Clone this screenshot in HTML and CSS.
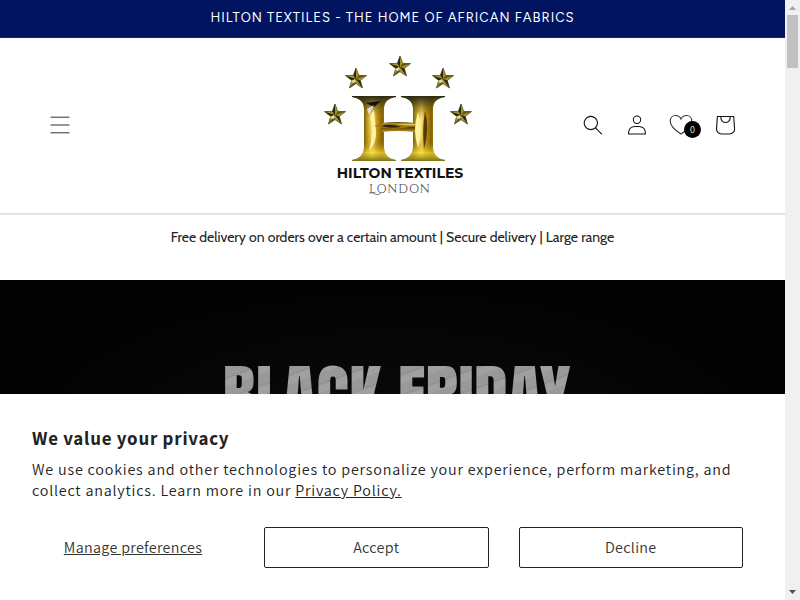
FILE: index.html
```html
<!DOCTYPE html>
<html lang="en">
<head>
<meta charset="utf-8">
<meta name="viewport" content="width=device-width, initial-scale=1">
<title>Hilton Textiles</title>
<link rel="stylesheet" href="styles.css">
</head>
<body>
<div class="page">
  <div class="announcement">HILTON TEXTILES - THE HOME OF AFRICAN FABRICS</div>
  <header class="header">
    <button class="icon-button menu" aria-label="Menu">
      <svg width="20" height="20" viewBox="0 0 20 20" stroke="#333" stroke-width="1"><path d="M.5 2.200h19M.5 10h19M.5 17.800h19"/></svg>
    </button>
    <a class="logo" href="#" aria-label="Hilton Textiles London">
      <svg width="150" height="144" viewBox="0 0 150 144">
        <defs>
          <linearGradient id="stem" x1="0" x2="1" y1="0" y2="0">
            <stop offset="0" stop-color="#3d3508"/><stop offset=".24" stop-color="#53440a"/><stop offset=".36" stop-color="#c9a820"/><stop offset=".46" stop-color="#ffe985"/><stop offset=".56" stop-color="#c59b17"/><stop offset=".68" stop-color="#866005"/><stop offset=".88" stop-color="#c99f20"/><stop offset="1" stop-color="#463706"/>
          </linearGradient>
          <linearGradient id="shade" x1="0" x2="0" y1="0" y2="1">
            <stop offset="0" stop-color="#2b2915"/><stop offset=".12" stop-color="#4d4410" stop-opacity=".7"/><stop offset=".35" stop-color="#ad8c13" stop-opacity="0"/><stop offset=".7" stop-color="#966b00" stop-opacity=".2"/><stop offset=".87" stop-color="#f2dc31" stop-opacity=".7"/><stop offset="1" stop-color="#7b7119"/>
          </linearGradient>
          <linearGradient id="bar" x1="0" x2="0" y1="0" y2="1"><stop offset="0" stop-color="#473808"/><stop offset=".25" stop-color="#e2c447"/><stop offset=".55" stop-color="#594008"/><stop offset="1" stop-color="#c69c20"/></linearGradient>
          <path id="post" d="M0 0H44V1C37 2 32 5 32 13V51C32 59 37 63 44 64V65H0V64C7 63 12 59 12 51V13C12 5 7 2 0 1Z"/>
          <g id="star">
            <path fill="#625618" stroke="#39340f" stroke-width=".7" d="M0-11 2.700-3.600 10.500-3.400 4.300 1.400 6.500 9 0 4.600-6.500 9-4.300 1.400-10.500-3.400-2.700-3.600Z"/>
            <path fill="#a4922b" d="M0-10V0L2.600-3.500ZM10-3 0 0 4.200 1.400ZM6 8 0 0V4.400ZM-6 8 0 0-4.200 1.400ZM-10-3 0 0-2.600-3.500Z"/>
            <path fill="#29270e" d="M0-10V0L-2.500-3.400ZM-9.500-3 0 0-4 1.200ZM6 8 0 0 4 1.200Z"/>
            <path fill="#dedaa8" d="M-5 2-1 0 0 3-3 4Z"/>
          </g>
        </defs>
        <use href="#star" x="76" y="14"/><use href="#star" x="32" y="26"/><use href="#star" x="119" y="26"/><use href="#star" x="11" y="62"/><use href="#star" x="137" y="62"/>
        <g transform="translate(28 43)"><use href="#post" fill="url(#stem)"/><use href="#post" fill="url(#shade)"/><path d="M14 7 29 5 22 11Z" fill="#111"/><path d="M15 13l7-4-5 10Z" fill="#ddd"/><path d="M18 20q4 17-1 35 8-9 7-20t-2-21Z" fill="#fff0a5"/></g>
        <g transform="translate(77 43)"><use href="#post" fill="url(#stem)"/><use href="#post" fill="url(#shade)"/><path d="M17 16q-6 18 0 36 6-19 0-36Z" fill="#fff09b"/><path d="M24 15q5 17-1 38-2-20 1-38Z" fill="#543d04"/></g>
        <path d="M58 70q15-2 33 0V79q-18-2-33 0Z" fill="url(#bar)"/>
        <path d="M50 73q15-5 36 1-18 4-36-1Z" fill="#9c7816"/><path d="M57 73q10-3 20 1-12 2-20-1Z" fill="#302607"/>
        <text class="logo-name" x="76" y="125" text-anchor="middle">HILTON TEXTILES</text>
        <text class="logo-city" x="76" y="140" text-anchor="middle">LONDON</text>
        <path d="M45 140q3-1 6 1t6-1" fill="none" stroke="#666" stroke-width=".8"/>
      </svg>
    </a>
    <nav class="tools" aria-label="Shop tools">
      <button class="icon-button" aria-label="Search"><svg width="20" height="20" viewBox="0 0 18 19"><path fill="#111" fill-rule="evenodd" d="M11.030 11.680A5.784 5.784 0 112.850 3.500a5.784 5.784 0 018.180 8.180zm.26 1.120a6.780 6.780 0 11.720-.7l5.400 5.400a.5.5 0 11-.71.7l-5.410-5.400z"/></svg></button>
      <a class="icon-button" href="#" aria-label="Log in"><svg width="20" height="20" viewBox="0 0 18 19"><path fill="#111" fill-rule="evenodd" d="M6 4.500a3 3 0 116 0 3 3 0 01-6 0zm3-4a4 4 0 100 8 4 4 0 000-8zm5.580 12.150c1.120.82 1.830 2.240 1.910 4.850H1.510c.08-2.600.79-4.030 1.900-4.850C4.660 11.750 6.500 11.500 9 11.500s4.350.26 5.580 1.150zM9 10.500c-2.500 0-4.650.24-6.170 1.350C1.270 12.980.5 14.930.5 18v.5h17V18c0-3.070-.77-5.020-2.330-6.150-1.520-1.100-3.670-1.350-6.170-1.350z"/></svg></a>
      <a class="icon-button" href="#" aria-label="Wishlist"><svg width="24" height="22" viewBox="0 0 24 22"><path fill="none" stroke="#333" stroke-width="1.100" d="M12 20C8 17.500 1.200 12.500 1.200 7.300 1.200 3.800 3.500 1.500 6.500 1.500c2.500 0 4.500 1.400 5.500 3.600 1-2.200 3-3.600 5.500-3.600 3 0 5.300 2.300 5.300 5.800 0 5.200-6.800 10.200-10.800 12.700Z"/></svg><span class="badge">0</span></a>
      <a class="icon-button" href="#" aria-label="Cart"><svg width="44" height="44" viewBox="0 0 40 40"><path fill="#111" fill-rule="evenodd" d="M15.750 11.800h-3.160l-.77 11.600a5 5 0 0 0 4.990 5.340h7.380a5 5 0 0 0 4.990-5.330L28.400 11.800zm0 1h-2.220l-.71 10.670a4 4 0 0 0 3.990 4.270h7.380a4 4 0 0 0 4-4.270l-.72-10.670h-2.220v.63a4.750 4.750 0 1 1-9.500 0zm8.500 0h-7.500v.63a3.750 3.750 0 1 0 7.500 0z"/></svg></a>
    </nav>
  </header>
  <main>
    <p class="delivery">Free delivery on orders over a certain amount | Secure delivery | Large range</p>
    <section class="hero"><h1>BLACK FRIDAY</h1></section>
  </main>
  <section class="privacy" aria-labelledby="privacy-title">
    <h2 id="privacy-title">We value your privacy</h2>
    <p>We use cookies and other technologies to personalize your experience, perform marketing, and collect analytics. Learn more in our <a href="#">Privacy Policy.</a></p>
    <div class="choices">
      <button class="choice manage">Manage preferences</button>
      <button class="choice">Accept</button>
      <button class="choice">Decline</button>
    </div>
  </section>
</div>
<div class="scrollbar" aria-hidden="true">
  <svg width="15" height="15" viewBox="0 0 15 15"><path d="M4 10h7L7.500 6Z" fill="#a3a3a3"/></svg>
  <div class="thumb"></div>
  <svg class="down" width="15" height="15" viewBox="0 0 15 15"><path d="M4 5h7L7.500 9Z" fill="#505050"/></svg>
</div>
</body>
</html>
```
FILE: styles.css
```css
* { box-sizing: border-box; }
body {
  margin: 0;
  height: 100vh;
  display: grid;
  grid-template-columns: 1fr 15px;
  overflow: hidden;
  background: #fff;
  color: #121212;
  font-family: Assistant, "Source Sans 3", "Source Sans Pro", "Noto Sans CJK SC", "Noto Sans", sans-serif;
}
.page {
  position: relative;
  display: flex;
  flex-direction: column;
  overflow: hidden;
  min-width: 0;
}
.announcement {
  padding: 8px 16px 10px;
  border-bottom: 1px solid #14276b;
  background: #00145f;
  color: #fff;
  font: 13px/19px Figtree, Lato, sans-serif;
  letter-spacing: 1px;
  text-align: center;
}
.header {
  display: grid;
  grid-template-columns: 1fr auto 1fr;
  align-items: center;
  padding: 15px 38px 16px;
  border-bottom: 2px solid #e2e2e2;
}
.icon-button {
  position: relative;
  display: flex;
  align-items: center;
  justify-content: center;
  width: 44px;
  height: 44px;
  padding: 0;
  border: 0;
  background: none;
}
.logo { display: block; padding-left: 12px; }
.logo svg { display: block; }
.logo-name { font: 700 14px Montserrat, Figtree, Lato, sans-serif; fill: #111; }
.logo-city { font: 12px Cinzel, "Liberation Serif", serif; letter-spacing: 1px; fill: #444; }
.tools { display: flex; justify-content: flex-end; }
.badge {
  position: absolute;
  right: 2px;
  bottom: 9px;
  width: 17px;
  height: 17px;
  border-radius: 50%;
  background: #000;
  color: #fff;
  font-size: 10px;
  line-height: 17px;
  text-align: center;
}
.delivery {
  margin: 0;
  padding: 12px 16px 33px;
  color: #222;
  font: 14px/20px Cabin, Lato, sans-serif;
  text-align: center;
}
.hero {
  height: 320px;
  padding-top: 68px;
  background: radial-gradient(ellipse at center, #0b0b0b, #020202 75%);
}
.hero h1 {
  margin: 0;
  padding-left: 8px;
  background: repeating-linear-gradient(160deg, #999 0 9px, #929292 10px 11px, #a0a0a0 12px 19px);
  background-clip: text;
  color: transparent;
  font: 400 69px/96px Anton, "Bebas Neue", "Liberation Sans Narrow", sans-serif;
  text-align: center;
}
.privacy {
  position: absolute;
  inset: auto 0 0;
  padding: 32px 42px 32px 32px;
  background: #fff;
  color: #222;
}
.privacy h2 { margin: 0 0 9px; font-size: 19px; line-height: 24px; letter-spacing: .04em; }
.privacy p { margin: 0; font-size: 16px; line-height: 21px; letter-spacing: .05em; }
.privacy a { color: inherit; }
.choices {
  display: grid;
  grid-template-columns: 202px 1fr 1fr;
  column-gap: 30px;
  margin-top: 26px;
}
.choice {
  height: 41px;
  padding: 0;
  border: 1px solid #222;
  border-radius: 2px;
  background: #fff;
  color: #333;
  font: inherit;
  font-size: 16px;
  letter-spacing: .02em;
}
.manage { border-color: transparent; text-decoration: underline; }
.scrollbar { display: flex; flex-direction: column; background: #f0f0f0; }
.scrollbar svg { display: block; }
.thumb { height: 53px; margin: 0 2px; background: #c1c1c1; }
.down { margin-top: auto; }
```
